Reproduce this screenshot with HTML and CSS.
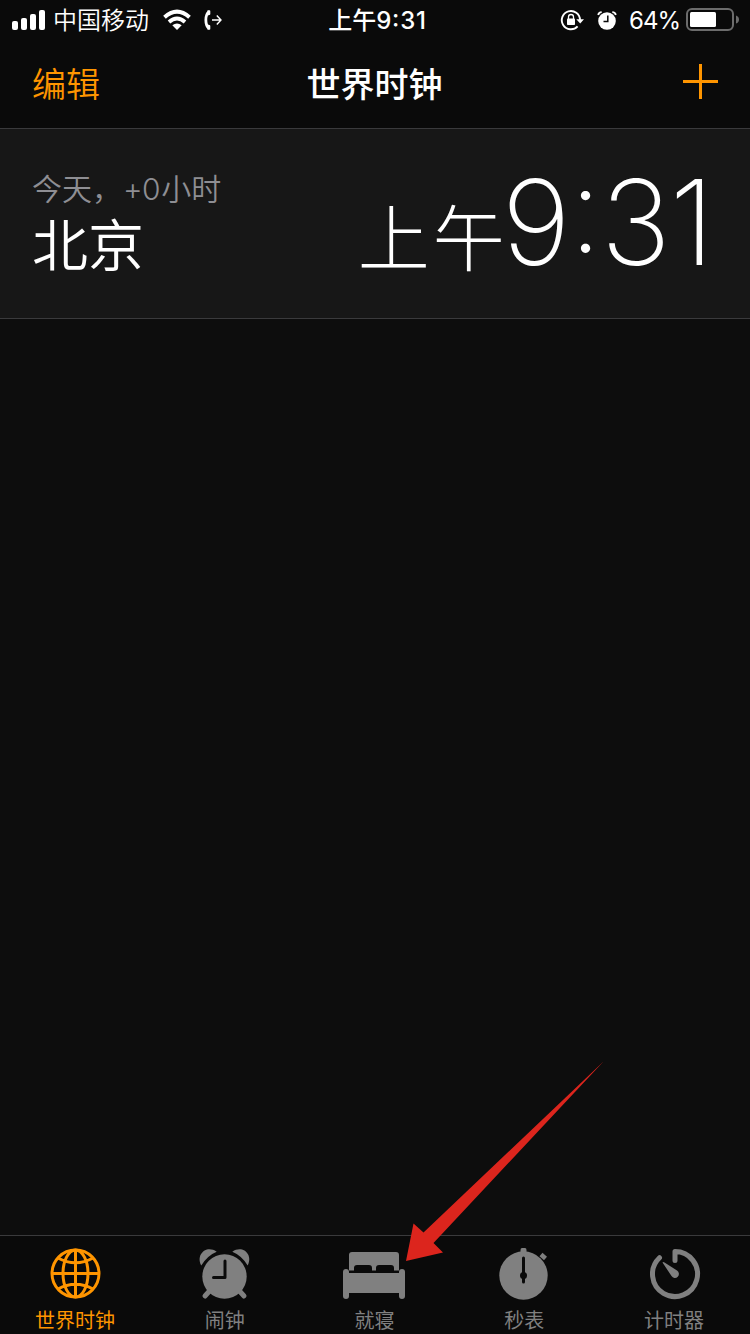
FILE: index.html
```
<!DOCTYPE html>
<html lang="zh-CN">
<head>
    <meta charset="UTF-8">
    <meta name="viewport" content="width=device-width, initial-scale=1.0">
    <title>世界时钟</title>
    <link rel="stylesheet" href="styles.css">
</head>
<body>
    <div class="screen">
        <header class="status-bar">
            <div class="status-left">
                <svg class="signal" width="34" height="20" viewBox="0 0 34 20" fill="#fff">
                    <rect x="0" y="11" width="6" height="9" rx="2"/>
                    <rect x="9" y="8" width="6" height="12" rx="2"/>
                    <rect x="18" y="4" width="6" height="16" rx="2"/>
                    <rect x="27" y="0" width="6" height="20" rx="2"/>
                </svg>
                <span class="carrier">中国移动</span>
                <svg class="wifi" width="28" height="20" viewBox="0 0 28 20">
                    <path d="M1.500 7.200 Q14 -3.800 26.500 7.200" fill="none" stroke="#fff" stroke-width="4"/>
                    <path d="M6 12 Q14 5 22 12" fill="none" stroke="#fff" stroke-width="3.800"/>
                    <path d="M9.300 15.300 Q14 11.500 18.700 15.300 L14 20 Z" fill="#fff"/>
                </svg>
                <svg class="forward" width="18" height="20" viewBox="0 0 18 20" fill="none" stroke="#fff">
                    <path d="M5 1.500 C0.800 5 0.800 15 5 18.500" stroke-width="2.800"/>
                    <path d="M3.500 0.300 h2 q0.800 0 0.800 1 v2.800 q0 1 -1 1 l-1.500 0.400 z M3.500 19.700 h2 q0.800 0 0.800 -1 v-2.800 q0 -1 -1 -1 l-1.500 -0.400 z" fill="#fff" stroke="none"/>
                    <path d="M8 10 h9 M12.800 5.500 L17 10 L12.800 14.500" stroke-width="1.400"/>
                </svg>
            </div>
            <div class="status-time">上午<span>9:31</span></div>
            <div class="status-right">
                <svg class="lock" width="24" height="20" viewBox="0 0 24 20">
                    <path d="M16.600 16.300 A9.100 9.100 0 1 1 19 10" fill="none" stroke="#fff" stroke-width="1.900"/>
                    <path d="M15.300 9.300 H23 L19.200 13.500 Z" fill="#fff"/>
                    <rect x="6" y="8.500" width="8" height="6.500" rx="0.800" fill="#fff"/>
                    <path d="M7.500 9 V7 a2.500 2.500 0 0 1 5 0 V9" fill="none" stroke="#fff" stroke-width="1.300"/>
                </svg>
                <svg class="mini-alarm" width="20" height="19" viewBox="0 0 20 19">
                    <circle cx="10" cy="10" r="8.800" fill="#fff"/>
                    <path d="M1.200 4 Q1.700 1.200 4.700 1.100 M15.300 1.100 Q18.300 1.200 18.800 4" fill="none" stroke="#fff" stroke-width="1.800"/>
                    <path d="M10.800 4.500 V10.500 H6.500" fill="none" stroke="#0a0a0a" stroke-width="1.500"/>
                </svg>
                <span class="percent">64%</span>
                <svg class="battery" width="54" height="24" viewBox="0 0 54 24">
                    <rect x="1" y="1" width="46" height="21" rx="5" fill="none" stroke="#6c6c6c" stroke-width="2"/>
                    <rect x="4" y="4" width="26" height="15" rx="1.500" fill="#fff"/>
                    <path d="M50 7.500 q3 1 3 4 q0 3 -3 4 z" fill="#6c6c6c"/>
                </svg>
            </div>
        </header>

        <nav class="nav-bar">
            <a class="edit">编辑</a>
            <h1>世界时钟</h1>
            <svg class="add" width="35" height="35" viewBox="0 0 35 35">
                <path d="M0 17.500 H35 M17.500 0 V35" stroke="#ff9500" stroke-width="3"/>
            </svg>
        </nav>

        <main class="clock-list">
            <div class="clock-row">
                <div class="place">
                    <div class="offset">今天，<span class="num">+0</span>小时</div>
                    <div class="city">北京</div>
                </div>
                <div class="time"><span class="ampm">上午</span><span class="digits">9:31</span></div>
            </div>
        </main>

        <footer class="tab-bar">
            <div class="tab active">
                <svg width="50" height="52" viewBox="-0.500 0.500 50 52" fill="none" stroke="currentColor" stroke-width="3">
                    <circle cx="25" cy="26" r="23.500"/>
                    <ellipse cx="25" cy="26" rx="12.500" ry="23.500"/>
                    <path d="M25 2.500 V49.500 M1.500 26 H48.500 M7.500 10.500 Q25 20 42.500 10.500 M7.500 41.500 Q25 32 42.500 41.500"/>
                </svg>
                <span>世界时钟</span>
            </div>
            <div class="tab">
                <svg width="50" height="52" viewBox="0.500 0 50 52" fill="currentColor">
                    <circle cx="25" cy="28.500" r="22.200"/>
                    <path d="M1.800 17.500 C-4 6.500 7 -3.500 17.200 3.800 Q8 7.500 1.800 17.500 Z"/>
                    <path d="M48.200 17.500 C54 6.500 43 -3.500 32.800 3.800 Q42 7.500 48.200 17.500 Z"/>
                    <path d="M10 43 L5.500 48 M40 43 L44.500 48" stroke="currentColor" stroke-width="5" stroke-linecap="round"/>
                    <path d="M25.500 13 V29.500 H14" fill="none" stroke="#0a0a0a" stroke-width="3" stroke-linecap="round" stroke-linejoin="round"/>
                </svg>
                <span>闹钟</span>
            </div>
            <div class="tab">
                <svg width="62" height="52" viewBox="0 1 62 52" fill="currentColor">
                    <path d="M6 23.500 V8 Q6 5 9 5 H53 Q56 5 56 8 V23.500 H51 V21 Q51 18 48 18 H36 Q33 18 33 21 V23.500 H29 V21 Q29 18 26 18 H14 Q11 18 11 21 V23.500 Z"/>
                    <rect x="0" y="22" width="6" height="30" rx="3"/>
                    <rect x="56" y="22" width="6" height="30" rx="3"/>
                    <rect x="5" y="26" width="52" height="20"/>
                </svg>
                <span>就寝</span>
            </div>
            <div class="tab">
                <svg width="50" height="52" viewBox="0.500 0 50 52" fill="currentColor">
                    <circle cx="25" cy="27.500" r="24.200"/>
                    <path d="M22 6 V2 Q22 0 23.500 0 H26.500 Q28 0 28 2 V6 Z"/>
                    <path d="M42.500 6.500 L47 10.500" stroke="currentColor" stroke-width="4.500"/>
                    <path d="M25 10 V34" stroke="#0a0a0a" stroke-width="3" stroke-linecap="round"/>
                    <circle cx="25" cy="27.500" r="3.500" fill="#0a0a0a"/>
                </svg>
                <span>秒表</span>
            </div>
            <div class="tab">
                <svg width="50" height="52" viewBox="-1 0 50 52">
                    <path d="M25 12.500 V3.500 A22.500 22.500 0 1 1 9.500 9.700" fill="none" stroke="currentColor" stroke-width="5" stroke-linecap="round" stroke-linejoin="round"/>
                    <path d="M12.500 14.500 Q13 13.500 14.500 14.500 L27 22.500 A4 4 0 1 1 21.500 28 Z" fill="currentColor"/>
                </svg>
                <span>计时器</span>
            </div>
        </footer>

        <svg class="pointer" width="200" height="202" viewBox="0 0 200 202">
            <path d="M198.500 0.500 L28.500 182 L38 191.500 L1 200 L8.500 162.500 L18.500 171.500 Z" fill="#dc251d"/>
        </svg>
    </div>
</body>
</html>
```
FILE: styles.css
```
body {
    margin: 0;
    background-color: #0d0d0d;
    color: #fff;
    font-family: Inter, "Noto Sans CJK SC", sans-serif;
}
.screen {
    position: relative;
    display: flex;
    flex-direction: column;
    width: 750px;
    height: 1334px;
    overflow: hidden;
}
svg {
    display: block;
    flex: none;
    overflow: visible;
}

/* status bar */
.status-bar {
    display: grid;
    grid-template-columns: 1fr auto 1fr;
    align-items: center;
    height: 40px;
    padding: 0 11px 0 12px;
    box-sizing: border-box;
    background-color: #0a0a0a;
    font-size: 24px;
    line-height: 38px;
    white-space: nowrap;
}
.status-left,
.status-right {
    display: flex;
    align-items: center;
}
.status-right {
    justify-content: flex-end;
}
.carrier {
    margin: 0 14px 0 7px;
    padding-top: 2px;
    font-weight: 350;
}
.forward {
    margin-left: 13px;
}
.status-time {
    padding: 2px 0 0 4px;
    font-weight: 500;
}
.status-time span {
    letter-spacing: 0.8px;
    font-feature-settings: "calt" 1;
}
.mini-alarm {
    margin-left: 12px;
}
.percent {
    margin: 0 6px 0 12px;
    padding-top: 2px;
    letter-spacing: -1px;
}
.battery {
    margin-right: -1px;
}

/* navigation */
.nav-bar {
    display: grid;
    grid-template-columns: 1fr auto 1fr;
    align-items: center;
    height: 89px;
    padding: 0 33px 0 32px;
    box-sizing: border-box;
    border-bottom: 1px solid #3a3a3c;
    background-color: #0a0a0a;
    font-size: 34px;
}
.edit {
    padding-bottom: 3px;
    color: #ff9500;
    font-weight: 350;
}
.nav-bar h1 {
    margin: 0;
    padding-bottom: 3px;
    font-size: 34px;
    font-weight: 500;
}
.add {
    justify-self: end;
    margin: 0 -1px 6px 0;
}

/* clock list */
.clock-list {
    flex: 1;
}
.clock-row {
    display: flex;
    justify-content: space-between;
    height: 190px;
    padding: 0 37px 0 32px;
    box-sizing: border-box;
    border-bottom: 1px solid #3a3a3c;
    background-color: #171717;
}
.place {
    padding-top: 38px;
}
.offset {
    color: #8e8e93;
    font-size: 30px;
    font-weight: 350;
    line-height: 44px;
}
.num {
    margin: 0 1px 0 1px;
    letter-spacing: -0.5px;
}
.city {
    font-size: 56px;
    font-weight: 350;
    line-height: 70px;
}
.time {
    padding-top: 18px;
    font-weight: 200;
    line-height: 150px;
    white-space: nowrap;
}
.ampm {
    margin-right: -6px;
    font-size: 72px;
    font-weight: 300;
    letter-spacing: 3px;
}
.digits {
    font-size: 118px;
    font-weight: 250;
    letter-spacing: -1.3px;
    font-feature-settings: "calt" 1;
}

/* tab bar */
.tab-bar {
    display: grid;
    grid-template-columns: repeat(5, 1fr);
    height: 99px;
    padding-right: 1px;
    box-sizing: border-box;
    border-top: 1px solid #3a3a3c;
    background-color: #0a0a0a;
}
.tab {
    display: flex;
    flex-direction: column;
    align-items: center;
    padding-top: 12px;
    color: #808080;
    font-size: 20px;
    font-weight: 400;
    line-height: 42px;
}
.tab.active {
    color: #ff9500;
}

/* red arrow over the bedtime tab */
.pointer {
    position: absolute;
    left: 405px;
    top: 1061px;
}
```
